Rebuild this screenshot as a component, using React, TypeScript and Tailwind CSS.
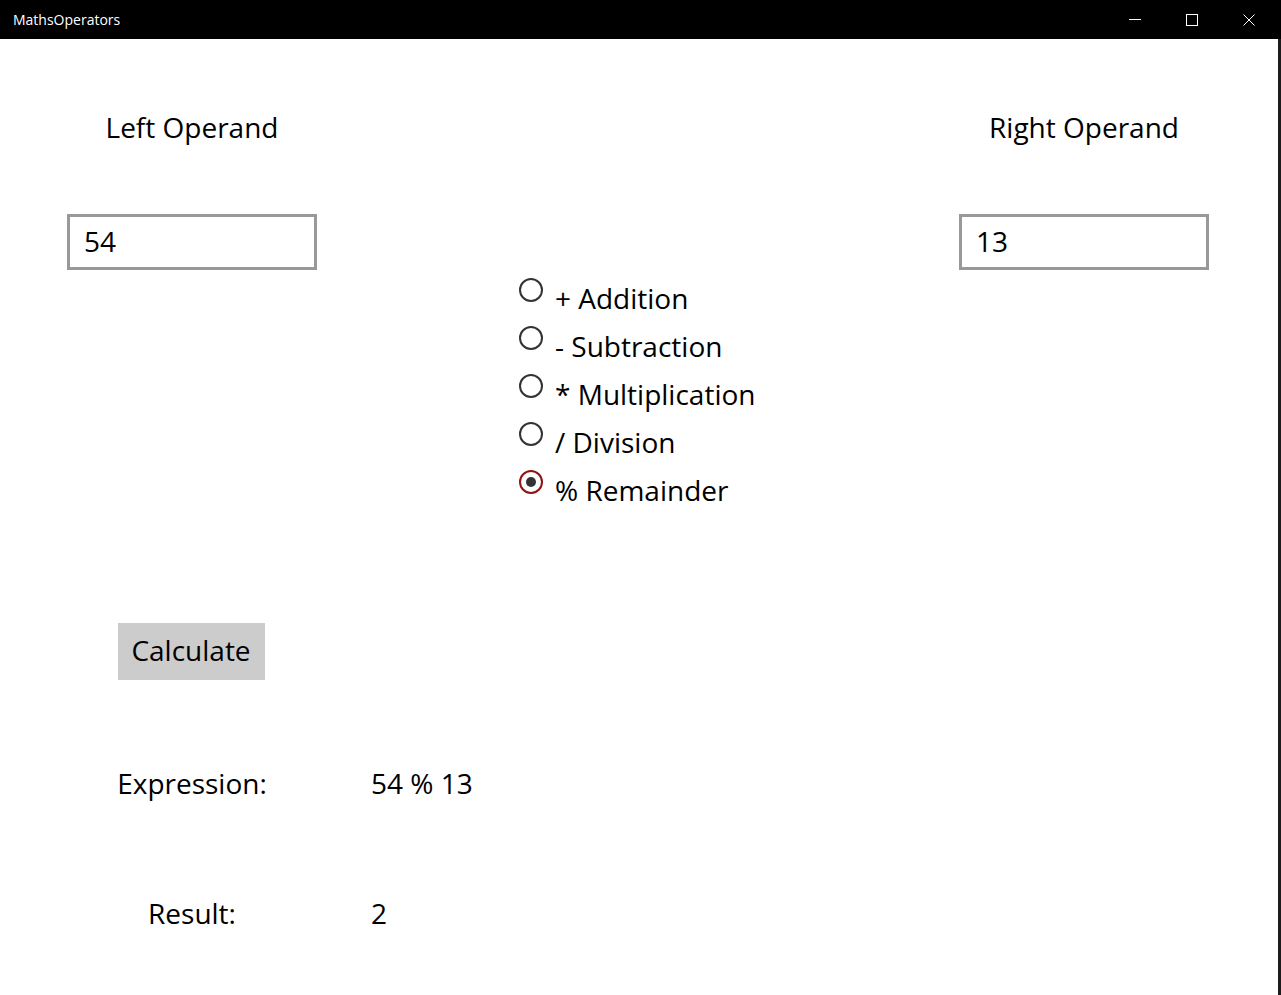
import type { ReactNode } from "react";

const ops = [
  { label: "+ Addition", checked: false },
  { label: "- Subtraction", checked: false },
  { label: "* Multiplication", checked: false },
  { label: "/ Division", checked: false },
  { label: "% Remainder", checked: true },
];

function Radio({ checked, children }: { checked: boolean; children: ReactNode }) {
  return (
    <div className="flex h-[48px] items-start">
      <div
        className={
          checked
            ? "mt-[2px] flex h-[24px] w-[24px] items-center justify-center rounded-full border-2 border-[#8f1313] bg-white"
            : "mt-[2px] h-[24px] w-[24px] rounded-full border-2 border-[#333333] bg-white"
        }
      >
        {checked && <div className="h-[10px] w-[10px] rounded-full bg-[#333333]" />}
      </div>
      <span className="ml-[12px] leading-[44px]">{children}</span>
    </div>
  );
}

function Operand({ label, value }: { label: string; value: string }) {
  return (
    <div className="flex w-[250px] flex-col items-center">
      <div className="mt-[70px] leading-[36px]">{label}</div>
      <div className="mt-[69px] flex h-[56px] w-[250px] items-center border-[3px] border-[#999999] bg-white px-[14px] pb-[2px]">
        {value}
      </div>
    </div>
  );
}

export default function App() {
  return (
    <div
      className="flex h-[995px] w-[1281px] flex-col overflow-hidden bg-white text-[28px] text-black"
      style={{ fontFamily: '"Open Sans", "Noto Sans", sans-serif' }}
    >
      <div className="flex h-[39px] shrink-0 items-center bg-black text-white">
        <span className="ml-[13px] text-[14px]">MathsOperators</span>
        <div className="ml-auto flex h-full items-center">
          <div className="flex h-full w-[57px] items-center justify-center">
            <div className="h-px w-[12px] bg-white" />
          </div>
          <div className="flex h-full w-[57px] items-center justify-center">
            <div className="h-[12px] w-[12px] border border-white" />
          </div>
          <div className="flex h-full w-[57px] items-center justify-center">
            <svg width="12" height="12" viewBox="0 0 12 12" fill="none" stroke="white" strokeWidth="1">
              <path d="M0.5 0.5L11.5 11.5M11.5 0.5L0.5 11.5" />
            </svg>
          </div>
          <div className="w-[4px]" />
        </div>
      </div>

      <div className="flex flex-1">
        <div className="flex flex-1 flex-col">
          <div className="flex pl-[67px] pr-[69px]">
            <Operand label="Left Operand" value="54" />
            <div className="flex-1" />
            <Operand label="Right Operand" value="13" />
          </div>

          <div className="ml-[519px] mt-[6px] flex flex-col">
            {ops.map((o) => (
              <Radio key={o.label} checked={o.checked}>
                {o.label}
              </Radio>
            ))}
          </div>

          <div className="ml-[66px] mt-[107px] flex w-[250px] justify-center">
            <button className="h-[57px] w-[147px] bg-[#cccccc] pb-[3px]">Calculate</button>
          </div>

          <div className="mt-[83px] flex h-[40px] items-center">
            <div className="ml-[67px] w-[250px] text-center">Expression:</div>
            <div className="ml-[54px]">54 % 13</div>
          </div>

          <div className="mt-[90px] flex h-[40px] items-center">
            <div className="ml-[67px] w-[250px] text-center">Result:</div>
            <div className="ml-[54px]">2</div>
          </div>
        </div>
        <div className="w-[3px] bg-[#1c1c1c]" />
      </div>
    </div>
  );
}
